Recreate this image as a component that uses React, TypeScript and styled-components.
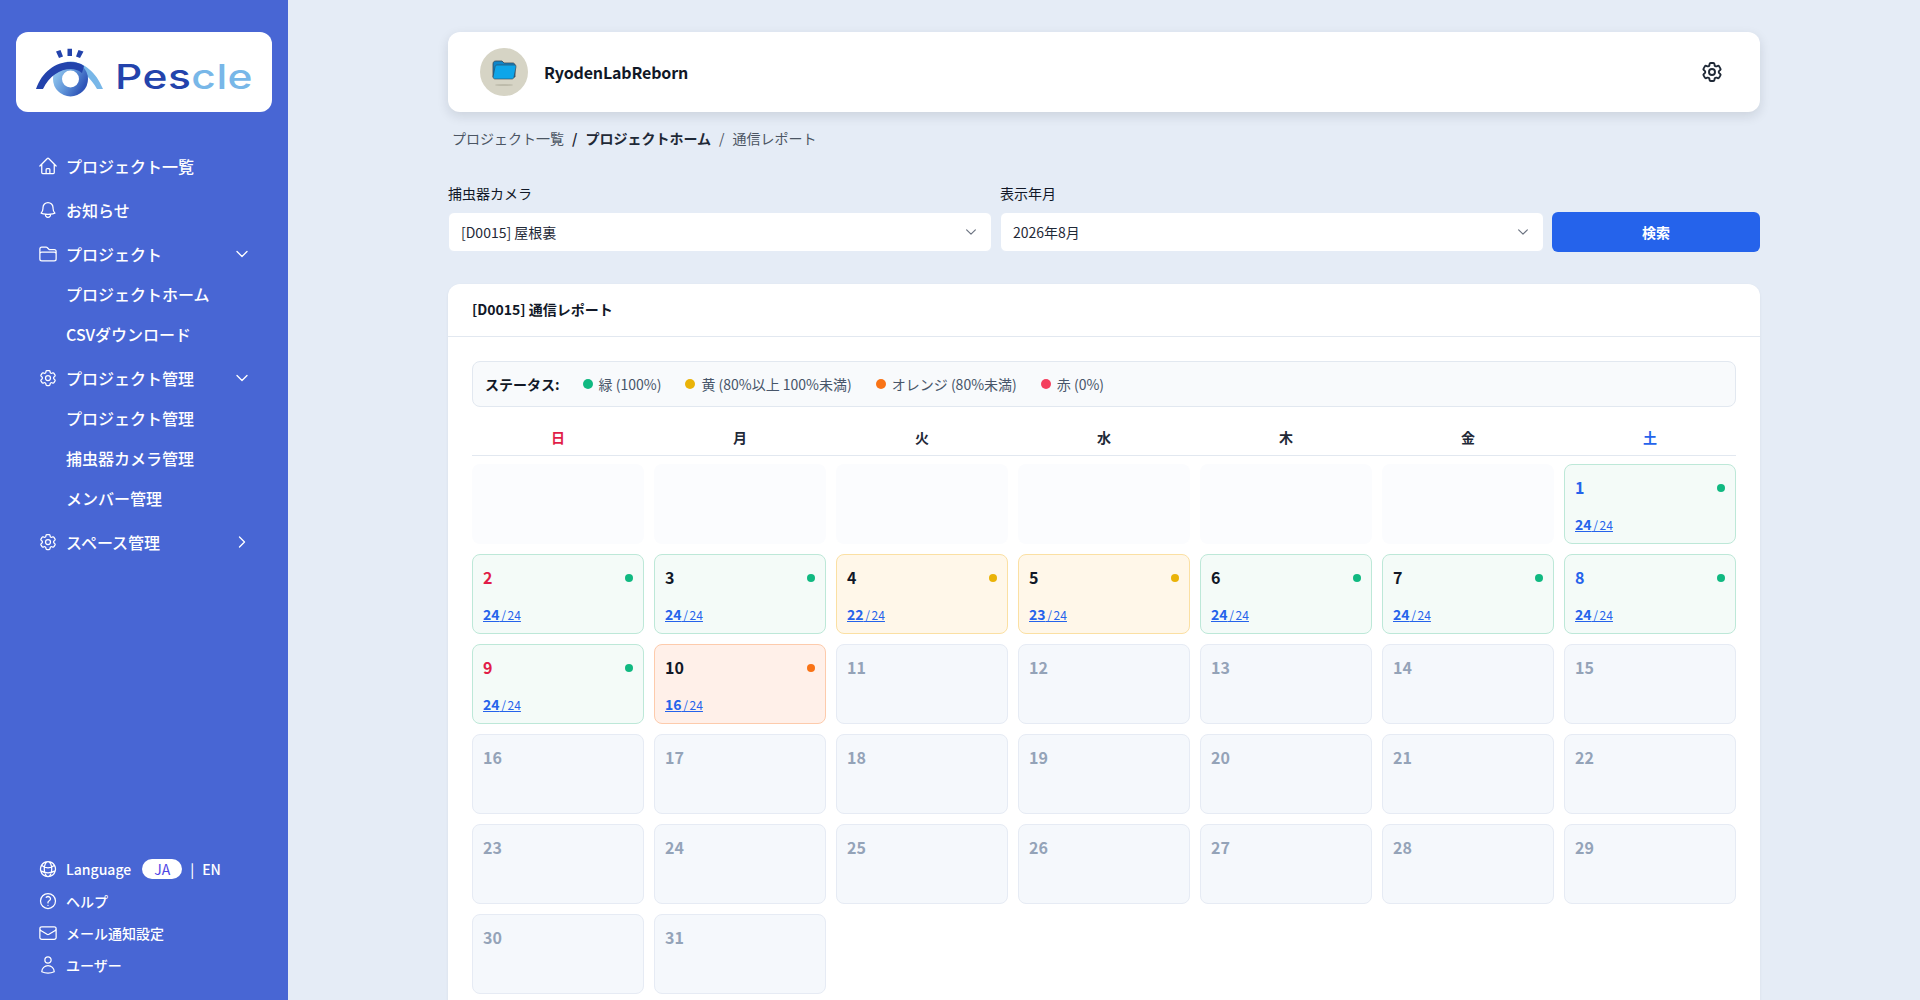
import styled, { createGlobalStyle } from "styled-components";
import {
  HiOutlineBell,
  HiOutlineChevronDown,
  HiOutlineChevronRight,
  HiOutlineCog6Tooth,
  HiOutlineEnvelope,
  HiOutlineFolder,
  HiOutlineGlobeAlt,
  HiOutlineHome,
  HiOutlineQuestionMarkCircle,
  HiOutlineUser,
} from "react-icons/hi2";

const GlobalStyle = createGlobalStyle`
    html, body {
        margin: 0;
        height: 100%;
        overflow: hidden;
    }
    body {
        font-family: "Noto Sans CJK JP", "Noto Sans", sans-serif;
        background-color: #e5ecf6;
        color: #111827;
    }
`;

type Status = "green" | "yellow" | "orange" | "none";

const statusColors = {
  green: { bg: "#f4fbf8", border: "#bde8d8", dot: "#10b981" },
  yellow: { bg: "#fff7e9", border: "#fbe0a3", dot: "#eab308" },
  orange: { bg: "#fff0e9", border: "#fdcbac", dot: "#f97316" },
  none: { bg: "#f5f8fc", border: "#e6ebf4", dot: "transparent" },
};

const Layout = styled.div`
    display: flex;
    height: 100vh;
    overflow: hidden;
`;

const Sidebar = styled.aside`
    flex: 0 0 288px;
    display: flex;
    flex-direction: column;
    box-sizing: border-box;
    height: 100%;
    padding: 32px 16px 19px;
    background-color: #4866d4;
    color: white;
`;

const LogoCard = styled.div`
    display: flex;
    align-items: flex-start;
    height: 80px;
    border-radius: 12px;
    background-color: white;
    padding: 11px 0 0 18px;
    box-sizing: border-box;
`;

const LogoText = styled.span`
    margin: 17px 0 0 7px;
    font-family: "Inter", sans-serif;
    font-size: 34px;
    line-height: 34px;
    font-weight: 500;
    letter-spacing: 0.4px;
    color: #2343ac;
    transform: scaleX(1.25);
    transform-origin: left center;

    em {
        font-style: normal;
        color: #78b7e8;
    }
`;

const Nav = styled.nav`
    display: flex;
    flex-direction: column;
    gap: 4px;
    margin-top: 34px;
    padding: 0 22px;
`;

const NavItem = styled.div`
    display: flex;
    align-items: center;
    gap: 8px;
    height: 40px;
    font-size: 16px;
    font-weight: 500;

    svg {
        flex: none;
    }
`;

const NavLabel = styled.span`
    flex: 1;
`;

const SubItems = styled.div`
    display: flex;
    flex-direction: column;
`;

const SubItem = styled.div`
    display: flex;
    align-items: center;
    height: 40px;
    padding-left: 28px;
    font-size: 16px;
    font-weight: 500;
`;

const SidebarFooter = styled.div`
    display: flex;
    flex-direction: column;
    margin-top: auto;
    padding: 0 22px;
`;

const FooterItem = styled.div`
    display: flex;
    align-items: center;
    gap: 8px;
    height: 32px;
    font-size: 14px;
    font-weight: 500;
`;

const LangPill = styled.span`
    display: flex;
    align-items: center;
    justify-content: center;
    width: 40px;
    height: 20px;
    margin-left: 3px;
    border-radius: 10px;
    background-color: white;
    color: #4f46e5;
    font-weight: 400;
`;

const Main = styled.main`
    flex: 1;
    min-width: 0;
    padding: 32px 160px;
`;

const ProjectCard = styled.header`
    display: flex;
    align-items: center;
    gap: 16px;
    height: 80px;
    padding: 0 36px 0 32px;
    box-sizing: border-box;
    border-radius: 12px;
    background-color: white;
    box-shadow: 0 4px 12px rgba(15, 23, 42, 0.12);
`;

const Avatar = styled.div`
    display: flex;
    align-items: center;
    justify-content: center;
    width: 48px;
    height: 48px;
    border-radius: 50%;
    background-color: #d6d4c5;
`;

const ProjectName = styled.h1`
    flex: 1;
    margin: 0;
    font-size: 16px;
    font-weight: 600;
    letter-spacing: -0.15px;
`;

const Breadcrumb = styled.div`
    display: flex;
    align-items: center;
    gap: 8px;
    height: 20px;
    margin: 16px 0 0 4px;
    font-size: 14px;
    color: #374151;
`;

const Crumb = styled.span<{ $strong?: boolean }>`
    font-weight: ${(p) => (p.$strong ? 600 : 400)};
    color: ${(p) => (p.$strong ? "#1f2937" : "#4b5563")};
`;

const SearchForm = styled.div`
    display: grid;
    grid-template-columns: 1fr 1fr 208px;
    gap: 8px;
    align-items: end;
    margin-top: 35px;
`;

const Field = styled.div`
    display: flex;
    flex-direction: column;
    gap: 9px;
`;

const Label = styled.label`
    font-size: 14px;
    line-height: 20px;
    color: #111827;
`;

const Select = styled.div`
    display: flex;
    align-items: center;
    justify-content: space-between;
    height: 40px;
    padding: 0 13px 0 12px;
    box-sizing: border-box;
    border: 1px solid #e5ecf6;
    border-radius: 6px;
    background-color: white;
    font-size: 14px;
    color: #1f2937;

    svg {
        color: #6b7280;
        stroke-width: 2;
    }
`;

const SearchButton = styled.button`
    height: 40px;
    border: none;
    border-radius: 6px;
    background-color: #2563eb;
    color: white;
    font-family: inherit;
    font-size: 14px;
    font-weight: 700;
`;

const ReportCard = styled.section`
    margin-top: 32px;
    border-radius: 12px;
    background-color: white;
    box-shadow: 0 1px 3px rgba(15, 23, 42, 0.06);
`;

const ReportTitle = styled.h2`
    margin: 0;
    height: 53px;
    padding: 0 24px;
    box-sizing: border-box;
    border-bottom: 1px solid #e2e8f0;
    font-size: 14px;
    font-weight: 600;
    line-height: 51px;
`;

const ReportBody = styled.div`
    padding: 24px;
`;

const Legend = styled.div`
    display: flex;
    align-items: center;
    gap: 24px;
    height: 46px;
    padding: 0 12px;
    box-sizing: border-box;
    border: 1px solid #e2e8f0;
    border-radius: 8px;
    background-color: #f8fafc;
    font-size: 14px;
    color: #475569;
`;

const LegendTitle = styled.span`
    margin-right: -1px;
    font-weight: 600;
    color: #111827;
`;

const LegendItem = styled.span`
    display: flex;
    align-items: center;
    gap: 6px;
`;

const Dot = styled.i<{ $color: string; $size?: number }>`
    display: block;
    flex: none;
    width: ${(p) => p.$size ?? 8}px;
    height: ${(p) => p.$size ?? 8}px;
    border-radius: 50%;
    background-color: ${(p) => p.$color};
`;

const WeekHeader = styled.div`
    display: grid;
    grid-template-columns: repeat(7, 1fr);
    gap: 10px;
    margin-top: 18px;
    border-bottom: 1px solid #e2e8f0;
`;

const WeekDay = styled.div<{ $color: string }>`
    height: 30px;
    font-size: 14px;
    font-weight: 600;
    line-height: 24px;
    text-align: center;
    color: ${(p) => p.$color};
`;

const CalendarGrid = styled.div`
    display: grid;
    grid-template-columns: repeat(7, 1fr);
    grid-auto-rows: 80px;
    gap: 10px;
    margin-top: 8px;
`;

const EmptyCell = styled.div`
    border-radius: 8px;
    background-color: #fbfcfe;
`;

const DayCell = styled.div<{ $status: Status }>`
    display: flex;
    flex-direction: column;
    justify-content: space-between;
    padding: 10px;
    box-sizing: border-box;
    border: 1px solid ${(p) => statusColors[p.$status].border};
    border-radius: 8px;
    background-color: ${(p) => statusColors[p.$status].bg};
`;

const DayTop = styled.div`
    display: flex;
    align-items: flex-start;
    justify-content: space-between;
    height: 24px;
`;

const DayNumber = styled.span<{ $color: string }>`
    font-size: 16px;
    line-height: 24px;
    font-weight: 600;
    color: ${(p) => p.$color};
`;

const CountLink = styled.a`
    align-self: flex-start;
    line-height: 16px;
    font-size: 12px;
    word-spacing: -1px;
    color: #2563eb;
    text-decoration: underline;

    b {
        font-size: 14px;
        font-weight: 700;
    }
`;

const StatusDotWrap = styled.span`
    margin-top: 9px;
`;

const ChevronSlot = styled.span`
    display: flex;

    svg {
        stroke-width: 2;
    }
`;

const weekDays = [
  { label: "日", color: "#e11d48" },
  { label: "月", color: "#1f2937" },
  { label: "火", color: "#1f2937" },
  { label: "水", color: "#1f2937" },
  { label: "木", color: "#1f2937" },
  { label: "金", color: "#1f2937" },
  { label: "土", color: "#2563eb" },
];

// counts for the days that already have a report, the rest of the month is future
const counts: Record<number, number> = { 1: 24, 2: 24, 3: 24, 4: 22, 5: 23, 6: 24, 7: 24, 8: 24, 9: 24, 10: 16 };

const getStatus = (count?: number): Status => {
  if (count === undefined) return "none";
  if (count === 24) return "green";
  return count >= 20 ? "yellow" : "orange";
};

const getDayColor = (day: number, count?: number) => {
  if (count === undefined) return "#94a3b8";
  if (day % 7 === 2) return "#e11d48";
  if (day % 7 === 1) return "#2563eb";
  return "#111827";
};

const LogoMark = () => (
  <svg width="74" height="58" viewBox="0 0 74 58">
    <defs>
      <linearGradient id="ring" x1="0" y1="0.2" x2="1" y2="0.8">
        <stop offset="0" stopColor="#8cc2ec" />
        <stop offset="0.5" stopColor="#5f93d8" />
        <stop offset="1" stopColor="#2f55b8" />
      </linearGradient>
    </defs>
    <path d="M36.5 19 C50 19 62 29 69 46 L63 46 C57 35 48 27 37 26 Z" fill="#78b7e8" />
    <circle cx="36.5" cy="36" r="13" fill="none" stroke="url(#ring)" strokeWidth="9" />
    <path d="M2 46 C8 29 21 19 36.5 19 C42 19 46 20 50 23 L48 30 C44 27 41 26 37 26 C26 26 15 33 9 46 Z" fill="#2343ac" />
    <path d="M22 8.5 L26.5 7 L29 13.5 L25 15 Z M33.5 5.7 H38 V13 H33.5 Z M44.5 7 L49.5 8.5 L46 15 L42 13.5 Z" fill="#2343ac" />
  </svg>
);

const FolderIcon = () => (
  <svg width="26" height="30" viewBox="0 0 26 30">
    <path d="M2 7 C2 5 3 4 5 4 H11 L13 6 H22 C23 6 24 7 24 8 V20 H2 Z" fill="#0f85c9" stroke="#374151" strokeWidth="0.8" />
    <path d="M4 10 C4 9 5 8 6 8 H24 C25 8 25 9 25 10 L23 20 C23 21 22 22 21 22 H4 C3 22 2 21 2 20 Z" fill="#0ea5e9" stroke="#374151" strokeWidth="0.6" />
    <ellipse cx="13" cy="28" rx="9" ry="1" fill="#bdbbab" />
  </svg>
);

export default function App() {
  const days = Array.from({ length: 31 }, (_, i) => i + 1);

  return (
    <Layout>
      <GlobalStyle />
      <Sidebar>
        <LogoCard>
          <LogoMark />
          <LogoText>Pes<em>cle</em></LogoText>
        </LogoCard>
        <Nav>
          <NavItem><HiOutlineHome size={20} /><NavLabel>プロジェクト一覧</NavLabel></NavItem>
          <NavItem><HiOutlineBell size={20} /><NavLabel>お知らせ</NavLabel></NavItem>
          <div>
            <NavItem><HiOutlineFolder size={20} /><NavLabel>プロジェクト</NavLabel><ChevronSlot><HiOutlineChevronDown size={16} /></ChevronSlot></NavItem>
            <SubItems>
              <SubItem>プロジェクトホーム</SubItem>
              <SubItem>CSVダウンロード</SubItem>
            </SubItems>
          </div>
          <div>
            <NavItem><HiOutlineCog6Tooth size={20} /><NavLabel>プロジェクト管理</NavLabel><ChevronSlot><HiOutlineChevronDown size={16} /></ChevronSlot></NavItem>
            <SubItems>
              <SubItem>プロジェクト管理</SubItem>
              <SubItem>捕虫器カメラ管理</SubItem>
              <SubItem>メンバー管理</SubItem>
            </SubItems>
          </div>
          <NavItem><HiOutlineCog6Tooth size={20} /><NavLabel>スペース管理</NavLabel><ChevronSlot><HiOutlineChevronRight size={16} /></ChevronSlot></NavItem>
        </Nav>
        <SidebarFooter>
          <FooterItem>
            <HiOutlineGlobeAlt size={20} />
            <span>Language</span>
            <LangPill>JA</LangPill>
            <span>|</span>
            <span>EN</span>
          </FooterItem>
          <FooterItem><HiOutlineQuestionMarkCircle size={20} /><span>ヘルプ</span></FooterItem>
          <FooterItem><HiOutlineEnvelope size={20} /><span>メール通知設定</span></FooterItem>
          <FooterItem><HiOutlineUser size={20} /><span>ユーザー</span></FooterItem>
        </SidebarFooter>
      </Sidebar>

      <Main>
        <ProjectCard>
          <Avatar><FolderIcon /></Avatar>
          <ProjectName>RyodenLabReborn</ProjectName>
          <HiOutlineCog6Tooth size={24} color="#1f2937" strokeWidth={1.9} />
        </ProjectCard>

        <Breadcrumb>
          <Crumb>プロジェクト一覧</Crumb>
          <Crumb $strong>/</Crumb>
          <Crumb $strong>プロジェクトホーム</Crumb>
          <Crumb>/</Crumb>
          <Crumb>通信レポート</Crumb>
        </Breadcrumb>

        <SearchForm>
          <Field>
            <Label>捕虫器カメラ</Label>
            <Select>[D0015] 屋根裏<HiOutlineChevronDown size={14} /></Select>
          </Field>
          <Field>
            <Label>表示年月</Label>
            <Select>2026年8月<HiOutlineChevronDown size={14} /></Select>
          </Field>
          <SearchButton>検索</SearchButton>
        </SearchForm>

        <ReportCard>
          <ReportTitle>[D0015] 通信レポート</ReportTitle>
          <ReportBody>
            <Legend>
              <LegendTitle>ステータス:</LegendTitle>
              <LegendItem><Dot $color="#10b981" $size={10} />緑 (100%)</LegendItem>
              <LegendItem><Dot $color="#eab308" $size={10} />黄 (80%以上 100%未満)</LegendItem>
              <LegendItem><Dot $color="#f97316" $size={10} />オレンジ (80%未満)</LegendItem>
              <LegendItem><Dot $color="#f43f5e" $size={10} />赤 (0%)</LegendItem>
            </Legend>

            <WeekHeader>
              {weekDays.map((d) => (
                <WeekDay key={d.label} $color={d.color}>{d.label}</WeekDay>
              ))}
            </WeekHeader>

            <CalendarGrid>
              {Array.from({ length: 6 }, (_, i) => <EmptyCell key={i} />)}
              {days.map((day) => {
                const count = counts[day];
                const status = getStatus(count);
                return (
                  <DayCell key={day} $status={status}>
                    <DayTop>
                      <DayNumber $color={getDayColor(day, count)}>{day}</DayNumber>
                      {count !== undefined && (
                        <StatusDotWrap><Dot $color={statusColors[status].dot} /></StatusDotWrap>
                      )}
                    </DayTop>
                    {count !== undefined && (
                      <CountLink><b>{count}</b> / 24</CountLink>
                    )}
                  </DayCell>
                );
              })}
            </CalendarGrid>
          </ReportBody>
        </ReportCard>
      </Main>
    </Layout>
  );
}
